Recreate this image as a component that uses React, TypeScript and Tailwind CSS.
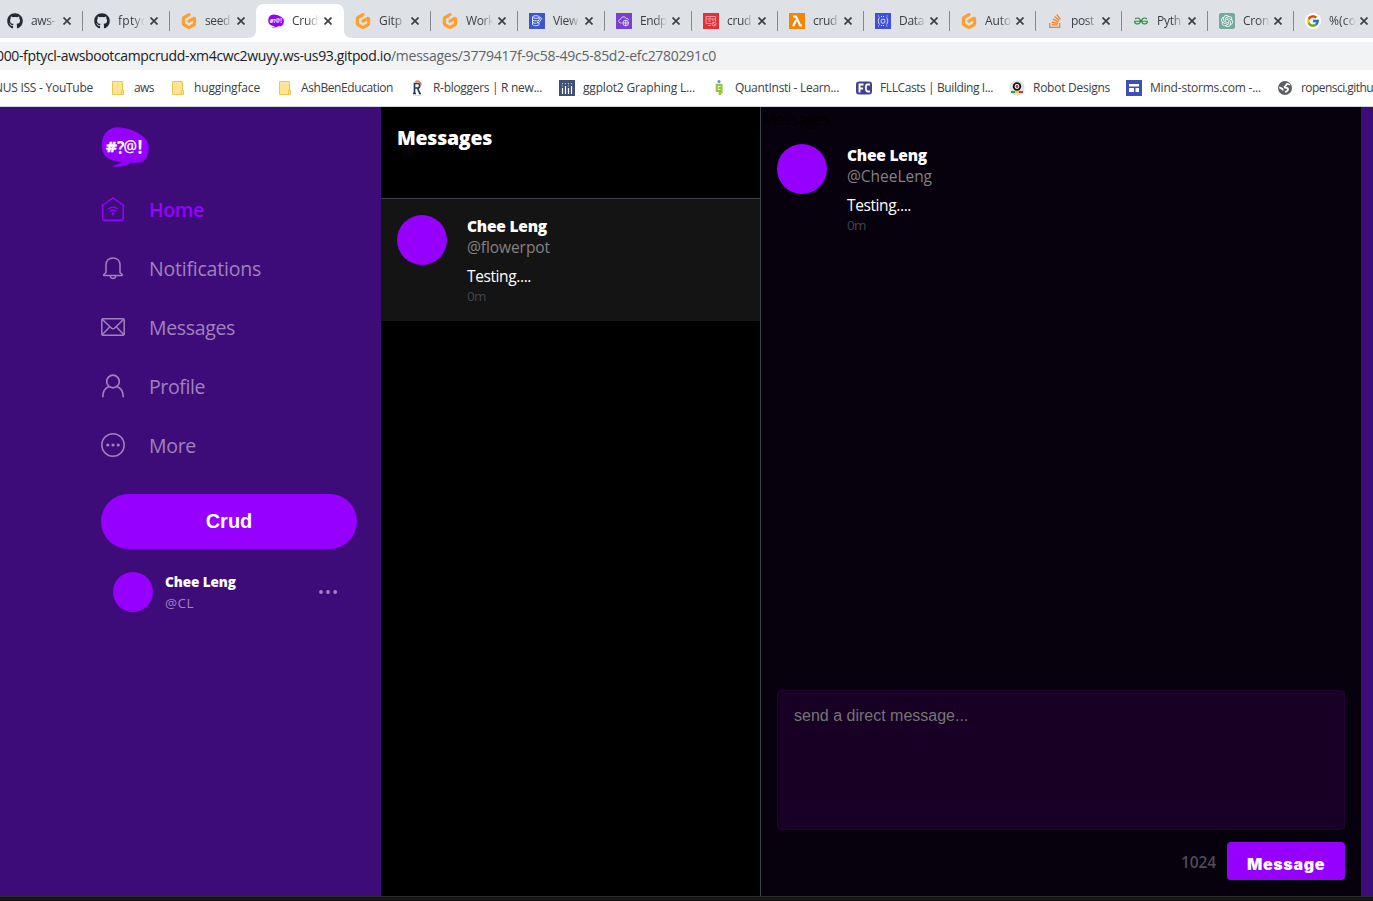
import { useLayoutEffect, useRef, type ReactNode } from "react";
import { FaGithub, FaStackOverflow } from "react-icons/fa";
import { SiGitpod, SiOpenai, SiGeeksforgeeks } from "react-icons/si";
import { FcGoogle } from "react-icons/fc";

/* Single-line label that spreads its letters over a fixed advance width. */
function Label({ w, className = "", children }: { w: number; className?: string; children: string }) {
  const ref = useRef<HTMLSpanElement>(null);
  useLayoutEffect(() => {
    const el = ref.current;
    if (!el) return;
    el.style.letterSpacing = "0px";
    const natural = el.getBoundingClientRect().width;
    el.style.letterSpacing = `${(w - natural) / children.length}px`;
  }, [w, children]);
  return (
    <span ref={ref} className={`inline-block whitespace-pre ${className}`}>
      {children}
    </span>
  );
}

const Gitpod = () => <SiGitpod className="size-4 text-[#ff9f2e]" />;
const Github = () => <FaGithub className="size-4 text-[#24292f]" />;

function Bubble({ className }: { className: string }) {
  return (
    <svg viewBox="0 0 48 40" className={className}>
      <path
        d="M16.500 0.200C25 .2 35 4 41.500 9c4.500 3.500 6.500 7 6.200 12-.3 8-2.500 13.500-9 14.600-3 .4-6 .1-8.500-.2-5 3-12 5.600-19.500 3.600 4.500-.8 8-2.200 10-4C9 34 1 30 .8 19 .6 8 7 .4 16.500.2Z"
        fill="#9500ff"
      />
      <g fill="#fff" fontFamily="Open Sans, sans-serif" fontWeight="700" fontSize="15">
        <text x="5" y="25" textLength="11" lengthAdjust="spacingAndGlyphs" stroke="#fff" strokeWidth=".5">#</text>
        <text x="16" y="26.500" fontSize="18" textLength="7.500" lengthAdjust="spacingAndGlyphs">?</text>
        <text x="22.500" y="24.500" fontSize="16" fontWeight="600" textLength="13.500" lengthAdjust="spacingAndGlyphs">@</text>
        <text x="36.500" y="26.500" fontSize="19" textLength="5" lengthAdjust="spacingAndGlyphs">!</text>
      </g>
    </svg>
  );
}

const Database = () => (
  <svg viewBox="0 0 16 16" className="size-4">
    <rect width="16" height="16" fill="#3b55d0" />
    <g fill="none" stroke="#dfe6ff" strokeWidth="1">
      <ellipse cx="7" cy="4" rx="3.500" ry="1.300" />
      <path d="M3.500 4v7.500c0 1.600 6.500 1.600 6.500 0V10M3.500 6.500c0 1.400 4 1.600 5 1M3.500 9c0 1.200 3 1.400 4 1.200M10 4v1.500M8.500 10l.3-1.500L11.500 4.500l1.300.9L10 9.500Z" />
    </g>
  </svg>
);
const Cloud = () => (
  <svg viewBox="0 0 16 16" className="size-4">
    <rect width="16" height="16" fill="#7742cf" />
    <g fill="none" stroke="#eadfff" strokeWidth=".9">
      <path d="M5.500 10H4.500C2 9.500 2.300 6.500 4.500 6.300 5 3.500 9 3 10.200 5.500c1.500-.2 2.300.6 2.500 1.500" />
      <circle cx="9.700" cy="10" r="2.800" />
      <path d="M9.700 7.200v5.600M6.900 10h5.600" />
    </g>
  </svg>
);
const RedTable = () => (
  <svg viewBox="0 0 16 16" className="size-4">
    <rect width="16" height="16" fill="#e0323b" />
    <g fill="none" stroke="#ff9ea3" strokeWidth=".9">
      <path d="M8.500 10.500H3v-7h9.500v5M3 6h9.500M5 8h3M7 3.500V6M10 6v2M5 12.500h3" />
      <circle cx="11" cy="11" r="2" />
      <path d="m9.700 9.700 2.600 2.600" />
    </g>
  </svg>
);
const Lambda = () => (
  <svg viewBox="0 0 16 16" className="size-4">
    <rect width="16" height="16" fill="#f08708" />
    <path d="M4 3.500h3l4.200 9H13M7.200 7 4 13.300" fill="none" stroke="#fff" strokeWidth="2.100" />
  </svg>
);
const Dynamo = () => (
  <svg viewBox="0 0 16 16" className="size-4">
    <rect width="16" height="16" fill="#3c50d8" />
    <g fill="none" stroke="#dce3ff" strokeWidth="1">
      <rect x="6.200" y="6.300" width="3.600" height="3.800" rx="1" />
      <path d="M4.500 4.500c-1 .5-.5 2.500-1.500 3.500 1 1 .5 3 1.500 3.500M11.500 4.500c1 .5.500 2.500 1.500 3.500-1 1-.5 3-1.500 3.500" />
      <path d="M3 3h1.500M11.500 3H13M3 13h1.500M11.500 13H13M6 3.500h4M6 12.500h4" strokeDasharray="1 1" />
    </g>
  </svg>
);

type Tab = { title: string; icon: ReactNode; active?: boolean; w: number };
const tabs: Tab[] = [
  { title: "aws-", icon: <Github />, w: 24 },
  { title: "fptyc", icon: <Github />, w: 29 },
  { title: "seed", icon: <Gitpod />, w: 25 },
  { title: "Crud", icon: <Bubble className="h-4 w-4" />, active: true, w: 26 },
  { title: "Gitp", icon: <Gitpod />, w: 23 },
  { title: "Work", icon: <Gitpod />, w: 28 },
  { title: "View", icon: <Database />, w: 25 },
  { title: "Endp", icon: <Cloud />, w: 27 },
  { title: "crud", icon: <RedTable />, w: 24 },
  { title: "crud", icon: <Lambda />, w: 24 },
  { title: "Data", icon: <Dynamo />, w: 25 },
  { title: "Auto", icon: <Gitpod />, w: 26 },
  { title: "post", icon: <FaStackOverflow className="size-4 text-[#f48024]" />, w: 23 },
  { title: "Pyth", icon: <SiGeeksforgeeks className="size-3.5 text-[#2f8d46]" />, w: 24 },
  {
    title: "Cron",
    icon: (
      <span className="flex size-4 items-center justify-center rounded-[2px] bg-[#75a99b]">
        <SiOpenai className="size-3 text-white" />
      </span>
    ),
    w: 26,
  },
  {
    title: "%(co",
    icon: (
      <span className="flex size-4 items-center justify-center rounded-full bg-white">
        <FcGoogle className="size-3.5" />
      </span>
    ),
    w: 27,
  },
];

function Close() {
  return (
    <svg viewBox="0 0 8 8" className="size-2 shrink-0">
      <path d="m.5.5 7 7m0-7-7 7" stroke="#3c4043" strokeWidth="1.700" />
    </svg>
  );
}

function TabStrip() {
  return (
    <div className="flex h-[38px] overflow-hidden bg-[#dee1e6]">
      <div className="-ml-[5px] flex">
        {tabs.map((t, i) => (
          <div key={i} className={`relative flex h-[38px] shrink-0 items-center pt-[3px] ${i < 8 ? "w-[87px]" : "w-[86px]"}`}>
            {t.active && (
              <svg className="absolute -left-2 bottom-0 h-[34px] w-[104px]" viewBox="0 0 104 34">
                <path d="M0 34c5 0 8-3 8-8V8c0-5 3-8 8-8h72c5 0 8 3 8 8v18c0 5 3 8 8 8Z" fill="#fff" />
              </svg>
            )}
            <span className={`h-5 w-px shrink-0 ${t.active || i === 4 ? "" : "bg-[#85888d]"}`} />
            <span className="relative ml-[11px] flex size-4 shrink-0 items-center justify-center">{t.icon}</span>
            <span className="relative ml-2 h-4 w-[30px] shrink-0 text-xs leading-4 text-[#3c4043] [mask-image:linear-gradient(90deg,#000_50%,transparent_90%)]">
              <Label w={t.w}>{t.title}</Label>
            </span>
            <span className={`relative flex ${i < 8 ? "ml-0.5" : "ml-px"}`}>
              <Close />
            </span>
          </div>
        ))}
      </div>
    </div>
  );
}

const Folder = () => (
  <svg viewBox="0 0 16 16" className="size-4">
    <path d="M2.500 1.500h10v9h1v4h-11Z" fill="#ffe591" stroke="#ebc750" />
    <path d="M11.500 14v-3.500h1.500" fill="none" stroke="#ebc750" />
  </svg>
);

type Mark = { text: string; w: number; box: string; icon: ReactNode };
const marks: Mark[] = [
  { text: "aws", w: 20, box: "w-[60px]", icon: <Folder /> },
  { text: "huggingface", w: 66, box: "w-[107px]", icon: <Folder /> },
  { text: "AshBenEducation", w: 92, box: "w-[132px]", icon: <Folder /> },
  {
    text: "R-bloggers | R new...", w: 109, box: "w-[150px]",
    icon: (
      <svg viewBox="0 0 16 16" className="size-4">
        <path d="M5.500 14V3.500h3c3 0 3 4.500 0 4.500H6M8.500 8l2.500 6M4 13.500h3M10 13.500h2" fill="none" stroke="#233a5e" strokeWidth="1.700" />
        <path d="M6.500 2c2-2 5.500 0 5.500 3" fill="none" stroke="#d98252" strokeWidth="1.800" />
        <path d="M4 15.600h8" stroke="#f1c5a5" strokeWidth=".8" />
      </svg>
    ),
  },
  {
    text: "ggplot2 Graphing L...", w: 112, box: "w-[152px]",
    icon: (
      <svg viewBox="0 0 16 16" className="size-4">
        <rect width="16" height="16" fill="#3f4f75" />
        <path d="M3.500 8v6M6.500 6v8M9.500 8v6M12.500 6v8" stroke="#fff" strokeWidth="1.200" />
        <path d="M3.500 3v4M6.500 3v2M9.500 3v4M12.500 3v2" stroke="#7ddfca" strokeWidth="1.200" strokeDasharray="1.200 1.200" />
      </svg>
    ),
  },
  {
    text: "QuantInsti - Learn...", w: 104, box: "w-[145px]",
    icon: (
      <svg viewBox="0 0 16 16" className="size-4">
        <circle cx="8" cy="1.600" r="1.600" fill="#5f97d0" />
        <path d="M10.500 4.800H5.800v6h4.700M10.500 4v8.500H8.800V15M7.500 7.800h3" fill="none" stroke="#93c83d" strokeWidth="2.200" />
      </svg>
    ),
  },
  {
    text: "FLLCasts | Building I...", w: 113, box: "w-[153px]",
    icon: (
      <svg viewBox="0 0 16 16" className="size-4">
        <rect y="1.500" width="16" height="13" rx="3" fill="#42428f" />
        <path d="M3.500 12.500V4.500H7.500M3.500 8.500h3.500M14 4.500h-2.500c-2.200 0-2.200 7 0 7H14" fill="none" stroke="#fff" strokeWidth="1.900" />
      </svg>
    ),
  },
  {
    text: "Robot Designs", w: 77, box: "w-[117px]",
    icon: (
      <svg viewBox="0 0 16 16" className="size-4">
        <circle cx="8" cy="8" r="7.700" fill="#dfe2e8" />
        <circle cx="8" cy="6.500" r="4.200" fill="#111" />
        <circle cx="8" cy="6.500" r="2.400" fill="#fff" />
        <circle cx="8" cy="6.500" r="1.400" fill="#d22" />
        <path d="M2 12h4" stroke="#1aa34a" strokeWidth="2" />
        <path d="M6 12h4" stroke="#ffc928" strokeWidth="2" />
        <path d="M10 12h4" stroke="#e02b2b" strokeWidth="2" />
      </svg>
    ),
  },
  {
    text: "Mind-storms.com -...", w: 111, box: "w-[151px]",
    icon: (
      <svg viewBox="0 0 16 16" className="size-4">
        <rect width="16" height="16" fill="#3c50b5" />
        <path d="M3 4h10v2.500H3ZM3 8h5v4H3ZM9.500 8H13v4H9.500Z" fill="#fff" />
      </svg>
    ),
  },
  {
    text: "ropensci.githu", w: 72, box: "w-[140px]",
    icon: (
      <svg viewBox="0 0 16 16" className="size-4">
        <circle cx="8" cy="8" r="7" fill="#5b5e62" />
        <path d="M13 5c-1-1-3-1.500-3.500-.5C9 6 8 6 7.500 7c0 1.500 2.500.5 3.500 1.500.6 1.500-1 3-3 3.500" fill="none" stroke="#fff" strokeWidth="1.700" />
        <path d="M2.200 7.500c2 .5 4 1 3.500 3" fill="none" stroke="#fff" strokeWidth="1.700" />
      </svg>
    ),
  },
];

function Toolbar() {
  return (
    <div className="h-[69px] overflow-hidden border-b border-[#d5d6d9] bg-white pt-1">
      <div className="flex h-7 items-center bg-[#f1f3f4] text-sm">
        <Label w={395} className="-ml-1 text-[#202124]">000-fptycl-awsbootcampcrudd-xm4cwc2wuyy.ws-us93.gitpod.io</Label>
        <Label w={325} className="text-[#5f6368]">/messages/3779417f-9c58-49c5-85d2-efc2780291c0</Label>
      </div>
      <div className="flex h-9 items-center text-xs text-[#3c4043]">
        <div className="-ml-[6px] w-[116px] shrink-0">
          <Label w={99}>NUS ISS - YouTube</Label>
        </div>
        {marks.map((m) => (
          <div key={m.text} className={`flex shrink-0 items-center gap-2 ${m.box}`}>
            {m.icon}
            <Label w={m.w}>{m.text}</Label>
          </div>
        ))}
      </div>
    </div>
  );
}

const navIcon = "size-6 shrink-0 fill-none stroke-current";
const nav = [
  {
    text: "Home", w: 55,
    icon: (
      <svg viewBox="0 0 24 24" className={navIcon} strokeWidth="1.500">
        <path d="M.5 9 12 .9 23.500 9M1.800 8.200V22c0 .8.500 1.300 1.300 1.300h17.800c.8 0 1.300-.5 1.300-1.300V8.200" />
        <path d="M7 12.200c3-2.700 7-2.700 10 0M9 14.300c2-1.500 4-1.500 6 0" />
        <circle cx="12" cy="17" r=".7" className="fill-current" />
      </svg>
    ),
  },
  {
    text: "Notifications", w: 112,
    icon: (
      <svg viewBox="0 0 24 24" className={navIcon} strokeWidth="1.500">
        <path d="M5 16.500V8.800C5 4.500 8 2 12 2s7 2.500 7 6.800v7.700l2.300 2.200c.3.400.1.800-.4.800H3.100c-.5 0-.7-.4-.4-.8ZM9.300 20c.2 1.700 1.300 2.500 2.700 2.500s2.500-.8 2.700-2.500" />
      </svg>
    ),
  },
  {
    text: "Messages", w: 86,
    icon: (
      <svg viewBox="0 0 24 24" className={navIcon} strokeWidth="1.500">
        <rect x=".8" y="3.800" width="22.400" height="16.400" rx="1.200" />
        <path d="m1.200 4.200 9.400 9c.8.800 2 .8 2.800 0l9.400-9M1.200 19.800l7.600-8M22.800 19.800l-7.600-8" />
      </svg>
    ),
  },
  {
    text: "Profile", w: 56,
    icon: (
      <svg viewBox="0 0 24 24" className={navIcon} strokeWidth="1.700">
        <circle cx="12" cy="7.500" r="6.300" />
        <path d="M1.800 23.200c0-5.500 2.800-9.500 6.500-10.700M22.200 23.200c0-5.500-2.800-9.500-6.500-10.700" />
      </svg>
    ),
  },
  {
    text: "More", w: 47,
    icon: (
      <svg viewBox="0 0 24 24" className={navIcon} strokeWidth="1.500">
        <circle cx="12" cy="12" r="11.200" />
        <g className="fill-current stroke-none">
          <circle cx="6.800" cy="12" r="1.600" />
          <circle cx="12" cy="12" r="1.600" />
          <circle cx="17.200" cy="12" r="1.600" />
        </g>
      </svg>
    ),
  },
];

function Sidebar() {
  return (
    <aside className="flex w-[381px] shrink-0 flex-col pl-[101px] pr-6 pt-5">
      <Bubble className="h-10 w-12" />
      <nav className="mt-[13px] flex flex-col">
        {nav.map((n, i) => (
          <div key={n.text} className={`flex h-[59px] items-center gap-6 ${i === 0 ? "font-semibold text-[#9500ff]" : "text-[#a182bd]"}`}>
            <span className="-mt-0.5">{n.icon}</span>
            <Label w={n.w} className="text-[19.500px] leading-6">{n.text}</Label>
          </div>
        ))}
      </nav>
      <button className="mt-[19px] flex h-[55px] shrink-0 items-center justify-center rounded-full bg-[#9500ff] pb-0.5 font-['Liberation_Sans',sans-serif] text-xl font-bold text-white">
        Crud
      </button>
      <div className="mt-[11px] flex h-16 items-center p-3">
        <span className="size-10 rounded-full bg-[#9500ff]" />
        <div className="ml-3 flex flex-1 flex-col items-start pt-0.5 text-[13.500px] leading-[21px]">
          <Label w={71} className="font-extrabold text-white">Chee Leng</Label>
          <Label w={29} className="text-[#a182bd]">@CL</Label>
        </div>
        <svg viewBox="0 0 20 4" className="mr-[7px] h-1 w-5 fill-[#a182bd]">
          <circle cx="3" cy="2" r="1.900" />
          <circle cx="10" cy="2" r="1.900" />
          <circle cx="17.200" cy="2" r="1.900" />
        </svg>
      </div>
    </aside>
  );
}

function MessageItem({ handle, w }: { handle: string; w: number }) {
  return (
    <div className="flex gap-5">
      <span className="size-[50px] shrink-0 rounded-full bg-[#9500ff]" />
      <div className="flex h-[90px] flex-col items-start text-[15.500px] leading-[21px]">
        <Label w={80} className="mt-px font-extrabold text-white">Chee Leng</Label>
        <Label w={w} className="text-[#828282]">{handle}</Label>
        <Label w={64} className="mt-2 text-white">Testing....</Label>
        <Label w={19} className="text-[13.500px] leading-[19px] text-[#41444f]">0m</Label>
      </div>
    </div>
  );
}

export default function App() {
  return (
    <div className="flex h-[901px] w-[1373px] flex-col overflow-hidden bg-[#3d0c78] font-['Open_Sans','Noto_Sans',sans-serif]">
      <TabStrip />
      <Toolbar />
      <div className="flex h-[789px]">
        <Sidebar />
        <section className="w-[380px] shrink-0 border-r border-[#3c404b] bg-black">
          <header className="h-[92px] border-b border-[#3c404b] px-4 pt-[18px]">
            <Label w={95} className="text-[19.500px] font-extrabold leading-[26px] text-white">Messages</Label>
          </header>
          <div className="bg-[#141414] p-4">
            <MessageItem handle="@flowerpot" w={83} />
          </div>
        </section>
        <section className="flex w-[600px] shrink-0 flex-col bg-[#07000d]">
          <div className="h-[21px] pl-px pt-px text-[15.500px] leading-[22px] text-black">
            <Label w={68}>Messages</Label>
          </div>
          <div className="p-4">
            <MessageItem handle="@CheeLeng" w={85} />
          </div>
          <form className="mt-auto px-4 pb-4">
            <textarea
              className="block h-[140px] w-full resize-none rounded border border-[#24003a] bg-[#170024] px-4 pt-[15px] font-['Liberation_Sans',sans-serif] text-base leading-[19px] placeholder:text-[#757575]"
              placeholder="send a direct message..."
            />
            <div className="mt-3 flex items-center justify-end">
              <Label w={35} className="mr-[11px] mt-1 text-[15.500px] font-semibold text-[#504a57]">1024</Label>
              <button type="button" className="flex h-[38px] w-[118px] items-center justify-center rounded bg-[#9500ff] pt-1.5 text-white">
                <Label w={78} className="font-['Inter',sans-serif] text-[16px] font-black leading-5">Message</Label>
              </button>
            </div>
          </form>
        </section>
      </div>
      <div className="h-[5px] border-t border-[#2a2a2a] bg-[#151515]" />
    </div>
  );
}
